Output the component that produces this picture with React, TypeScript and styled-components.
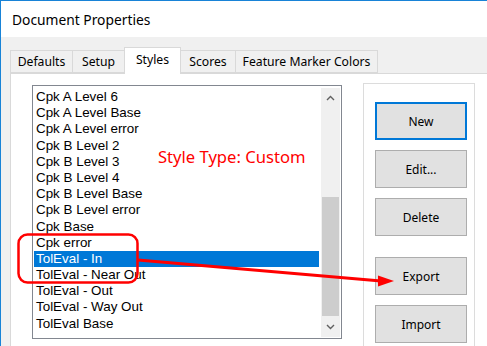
import styled, { createGlobalStyle } from "styled-components";

const GlobalStyle = createGlobalStyle`
  html, body {
    margin: 0;
    padding: 0;
    background: #ffffff;
  }
  body {
    font-family: "Noto Sans", "Liberation Sans", sans-serif;
    color: #000;
  }
`;

const styleNames = [
  "Cpk A Level 6",
  "Cpk A Level Base",
  "Cpk A Level error",
  "Cpk B Level 2",
  "Cpk B Level 3",
  "Cpk B Level 4",
  "Cpk B Level Base",
  "Cpk B Level error",
  "Cpk Base",
  "Cpk error",
  "TolEval - In",
  "TolEval - Near Out",
  "TolEval - Out",
  "TolEval - Way Out",
  "TolEval Base",
];

const tabs = [
  { label: "Defaults", width: 63 },
  { label: "Setup", width: 53 },
  { label: "Styles", width: 57 },
  { label: "Scores", width: 56 },
  { label: "Feature Marker Colors", width: 143 },
];

const Window = styled.div`
  position: relative;
  width: 487px;
  height: 346px;
  overflow: hidden;
  box-sizing: border-box;
  border-left: 1px solid #1883d7;
  border-top: 1px solid #1883d7;
  background: #f0f0f0;
  display: flex;
  flex-direction: column;
`;

const TitleBar = styled.div`
  height: 36px;
  flex: none;
  background: #ffffff;
  display: flex;
  align-items: center;
  padding-left: 11px;
  font-size: 13.8px;
  color: #000;
`;

const Body = styled.div`
  flex: 1;
  display: flex;
  flex-direction: column;
  padding: 10px 0 0 9px;
`;

const TabRow = styled.div`
  display: flex;
  align-items: flex-end;
  height: 26px;
`;

const Tab = styled.div<{ $active?: boolean; $w: number }>`
  position: relative;
  box-sizing: border-box;
  width: ${(p) => p.$w}px;
  height: ${(p) => (p.$active ? 27 : 23)}px;
  margin-bottom: ${(p) => (p.$active ? -1 : 0)}px;
  margin-left: -1px;
  z-index: ${(p) => (p.$active ? 2 : 1)};
  background: ${(p) => (p.$active ? "#ffffff" : "#f0f0f0")};
  border: 1px solid #d9d9d9;
  border-bottom: ${(p) => (p.$active ? "none" : "1px solid #d9d9d9")};
  display: flex;
  align-items: ${(p) => (p.$active ? "flex-start" : "center")};
  justify-content: center;
  padding-top: ${(p) => (p.$active ? 3 : 0)}px;
  font-size: 12.2px;
  color: #000;
  &:first-child {
    margin-left: 0;
  }
`;

const Panel = styled.div`
  flex: 1;
  background: #ffffff;
  border: 1px solid #d9d9d9;
  border-right: none;
  display: flex;
  align-items: flex-start;
  gap: 21px;
  padding: 11px 0 0 21px;
`;

const ListBox = styled.div`
  box-sizing: border-box;
  width: 310px;
  height: 254px;
  flex: none;
  border: 1px solid #828790;
  background: #ffffff;
  display: flex;
`;

const Items = styled.div`
  flex: 1;
  padding-top: 3px;
`;

const Item = styled.div<{ $selected?: boolean }>`
  height: 16.2px;
  line-height: 16.2px;
  margin: 0 2px 0 1px;
  padding-left: 2px;
  font-family: "Liberation Sans", Arial, sans-serif;
  font-size: 13.4px;
  white-space: nowrap;
  color: ${(p) => (p.$selected ? "#ffffff" : "#000000")};
  background: ${(p) => (p.$selected ? "#0078d7" : "transparent")};
`;

const ScrollBar = styled.div`
  width: 19px;
  margin: 2px 1px 1px 0;
  background: #f0f0f0;
  display: flex;
  flex-direction: column;
`;

const ArrowButton = styled.div`
  height: 20px;
  flex: none;
  display: flex;
  align-items: center;
  justify-content: center;
`;

const Track = styled.div`
  flex: 1;
  display: flex;
  flex-direction: column;
  justify-content: flex-end;
`;

const Thumb = styled.div`
  height: 119px;
  margin: 0 1px 1px;
  background: #cdcdcd;
`;

const ButtonBox = styled.div`
  box-sizing: border-box;
  width: 112px;
  height: 280px;
  flex: none;
  margin-top: -2px;
  border: 1px solid #dcdcdc;
  padding: 18px 0 0 11px;
  display: flex;
  flex-direction: column;
  gap: 10px;
`;

const Button = styled.div<{ $default?: boolean; $spaced?: boolean }>`
  box-sizing: border-box;
  width: 92px;
  height: 38px;
  flex: none;
  margin-top: ${(p) => (p.$spaced ? 11 : 0)}px;
  background: #e1e1e1;
  border: ${(p) => (p.$default ? "2px solid #0078d7" : "1px solid #adadad")};
  display: flex;
  align-items: center;
  justify-content: center;
  font-size: 12px;
  color: #000;
`;

const Note = styled.div`
  position: absolute;
  left: 157px;
  top: 146px;
  font-size: 16.6px;
  line-height: 20px;
  color: #ff0000;
  white-space: nowrap;
`;

const Markup = styled.svg`
  position: absolute;
  left: 0;
  top: 0;
  pointer-events: none;
`;

const Chevron = ({ up }: { up?: boolean }) => (
  <svg width="9" height="6" viewBox="0 0 9 6">
    <polyline
      points={up ? "1,5 4.5,1.5 8,5" : "1,1 4.5,4.5 8,1"}
      fill="none"
      stroke="#606060"
      strokeWidth="1.4"
    />
  </svg>
);

export default function App() {
  return (
    <>
      <GlobalStyle />
      <Window>
        <TitleBar>Document Properties</TitleBar>
        <Body>
          <TabRow>
            {tabs.map((t) => (
              <Tab key={t.label} $w={t.width} $active={t.label === "Styles"}>
                {t.label}
              </Tab>
            ))}
          </TabRow>
          <Panel>
            <ListBox>
              <Items>
                {styleNames.map((name) => (
                  <Item key={name} $selected={name === "TolEval - In"}>
                    {name}
                  </Item>
                ))}
              </Items>
              <ScrollBar>
                <ArrowButton>
                  <Chevron up />
                </ArrowButton>
                <Track>
                  <Thumb />
                </Track>
                <ArrowButton>
                  <Chevron />
                </ArrowButton>
              </ScrollBar>
            </ListBox>
            <ButtonBox>
              <Button $default>New</Button>
              <Button>Edit...</Button>
              <Button>Delete</Button>
              <Button $spaced>Export</Button>
              <Button>Import</Button>
            </ButtonBox>
          </Panel>
        </Body>
        <Note>Style Type: Custom</Note>
        <Markup width="487" height="346" viewBox="0 0 487 346">
          <rect
            x="17.5"
            y="233.5"
            width="119"
            height="48"
            rx="9"
            fill="none"
            stroke="#ff0000"
            strokeWidth="2.5"
          />
          <line x1="137" y1="259" x2="380" y2="280" stroke="#ff0000" strokeWidth="3" />
          <polygon points="377,274.5 393,280 377,285.5" fill="#ff0000" />
        </Markup>
      </Window>
    </>
  );
}
